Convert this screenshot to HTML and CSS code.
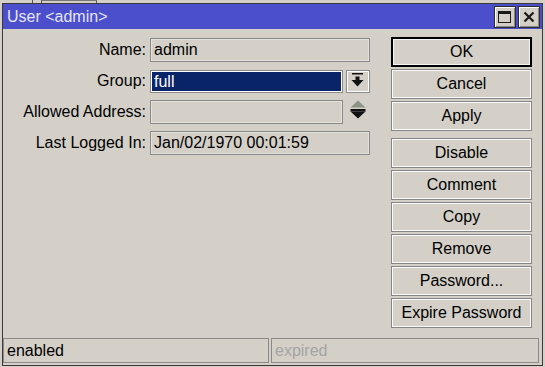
FILE: index.html
```html
<!DOCTYPE html>
<html>
<head>
<meta charset="utf-8">
<link rel="stylesheet" href="styles.css">
</head>
<body>
<div class="backdrop"><span class="bd-gap"></span><span class="bd-a"></span><span class="bd-b"></span></div>
<div class="window">
  <div class="titlebar">
    <span class="title">User &lt;admin&gt;</span>
    <div class="tbtns">
      <div class="tbtn"><svg width="14" height="14" viewBox="0 0 14 14"><rect x="0.5" y="1.5" width="12" height="11" fill="none" stroke="#1a1a1a" stroke-width="1"/><rect x="0" y="1" width="13" height="3" fill="#1a1a1a"/></svg></div>
      <div class="tbtn"><svg width="12" height="12" viewBox="0 0 12 12"><path d="M1.5 1.5 L10.5 10.5 M10.5 1.5 L1.5 10.5" stroke="#1a1a1a" stroke-width="2.2"/></svg></div>
    </div>
  </div>
  <div class="body">
    <div class="main">
      <div class="form">
        <div class="row"><span class="label">Name:</span><div class="field wide">admin</div></div>
        <div class="row"><span class="label">Group:</span><div class="field short selected">full</div><div class="dd"><svg width="24" height="23" viewBox="0 0 24 23"><rect x="6" y="3" width="11" height="1.5" fill="#111"/><rect x="9.5" y="6.5" width="4" height="3.5" fill="#111"/><polygon points="5.5,10 17.5,10 11.5,16.5" fill="#111"/></svg></div></div>
        <div class="row"><span class="label">Allowed Address:</span><div class="field short"></div><div class="spin"><svg width="24" height="24" viewBox="0 0 24 24"><polygon points="4.5,7.5 19.5,7.5 12,0.5" fill="#8d9384"/><rect x="4.5" y="9" width="15" height="2.5" fill="#111"/><polygon points="4.5,11.5 19.5,11.5 12,18.5" fill="#111"/></svg></div></div>
        <div class="row"><span class="label">Last Logged In:</span><div class="field wide">Jan/02/1970 00:01:59</div></div>
      </div>
      <div class="buttons">
        <div class="btn default">OK</div>
        <div class="btn">Cancel</div>
        <div class="btn">Apply</div>
        <div class="btn sep">Disable</div>
        <div class="btn">Comment</div>
        <div class="btn">Copy</div>
        <div class="btn">Remove</div>
        <div class="btn">Password...</div>
        <div class="btn">Expire Password</div>
      </div>
    </div>
    <div class="status">
      <div class="sfield first">enabled</div>
      <div class="sfield second">expired</div>
    </div>
  </div>
</div>
</body>
</html>
```
FILE: styles.css
```css
html, body {
  margin: 0;
  padding: 0;
}
body {
  background: #d4d0c8;
  font-family: "Liberation Sans", Arial, sans-serif;
  font-size: 16px;
  color: #000;
  width: 545px;
  height: 367px;
  overflow: hidden;
}
.backdrop {
  display: flex;
  height: 3px;
}
.bd-gap { width: 32px; }
.bd-a { width: 8px; border-left: 1px solid #555; }
.bd-b { width: 54px; border-left: 1px solid #555; border-right: 1px solid #555; border-top: 1px solid #777; }
.window {
  margin-left: 2px;
  width: 541px;
  height: 363px;
  box-sizing: border-box;
  border: 1px solid #3a3a3a;
  background: #d4d0c8;
  display: flex;
  flex-direction: column;
}
.titlebar {
  height: 25px;
  background: #4b4fcc;
  display: flex;
  align-items: center;
  justify-content: space-between;
  flex-shrink: 0;
}
.title {
  color: #e6e6fa;
  padding-left: 4px;
  font-size: 16px;
  line-height: 18px;
}
.tbtns {
  display: flex;
  gap: 2px;
  margin-right: 2px;
}
.tbtn {
  width: 22px;
  height: 22px;
  box-sizing: border-box;
  background: #d4d0c8;
  border: 1px solid #2e2e2e;
  box-shadow: inset 1px 1px 0 #fff, inset -1px -1px 0 #8a8a8a;
  display: flex;
  align-items: center;
  justify-content: center;
}
.body {
  flex: 1;
  display: flex;
  flex-direction: column;
}
.main {
  flex: 1;
  display: flex;
  padding-top: 8px;
}
.form {
  display: flex;
  flex-direction: column;
  gap: 7px;
  padding-top: 1px;
}
.row {
  display: flex;
  align-items: center;
  height: 24px;
}
.label {
  width: 143px;
  text-align: right;
  margin-right: 4px;
  white-space: nowrap;
}
.field {
  height: 24px;
  box-sizing: border-box;
  border: 1px solid #8a8a8a;
  box-shadow: inset 0 0 0 1px #e4e1db;
  padding-left: 3px;
  line-height: 22px;
  white-space: nowrap;
}
.field.wide { width: 220px; }
.field.short { width: 193px; }
.field.selected {
  background: #0a246a;
  color: #fff;
  box-shadow: inset 0 0 0 1px #fff;
  height: 23px;
  line-height: 21px;
}
.dd {
  margin-left: 3px;
  width: 24px;
  height: 23px;
  box-sizing: border-box;
  border: 1px solid #8a8a8a;
  box-shadow: inset 0 0 0 1px #fff;
  display: flex;
}
.dd svg { margin: -1px; }
.spin {
  margin-left: 3px;
  width: 24px;
  height: 24px;
  display: flex;
}
.buttons {
  margin-left: 21px;
  width: 141px;
  display: flex;
  flex-direction: column;
  gap: 2px;
}
.btn {
  height: 30px;
  box-sizing: border-box;
  border: 1px solid #858585;
  box-shadow: inset 0 0 0 1px #fbfbfb;
  display: flex;
  align-items: center;
  justify-content: center;
  white-space: nowrap;
}
.btn.default {
  border: 2px solid #000;
  box-shadow: inset 0 0 0 1px #f4f4f4;
}
.btn.sep { margin-top: 5px; }
.status {
  display: flex;
  gap: 2px;
  height: 25px;
  margin-bottom: 2px;
}
.sfield {
  box-sizing: border-box;
  border: 1px solid #8a8a8a;
  height: 25px;
  line-height: 23px;
  padding-left: 3px;
}
.sfield.first { width: 266px; }
.sfield.second { width: 268px; color: #a4a4a4; }
```
